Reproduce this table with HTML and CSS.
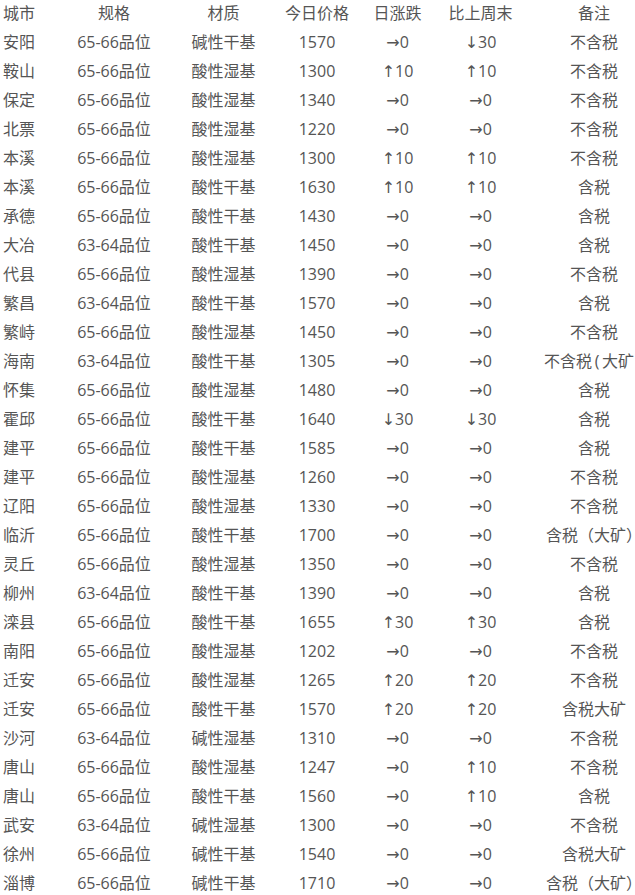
FILE: index.html
```html
<!DOCTYPE html>
<html lang="zh-CN">
<head>
<meta charset="utf-8">
<title>球团价格</title>
<link rel="stylesheet" href="styles.css">
</head>
<body>
<table class="price-table">
<colgroup>
<col class="c-city"><col class="c-spec"><col class="c-mat"><col class="c-price"><col class="c-day"><col class="c-week"><col class="c-note">
</colgroup>
<thead>
<tr><th class="city">城市</th><th>规格</th><th>材质</th><th>今日价格</th><th>日涨跌</th><th>比上周末</th><th>备注</th></tr>
</thead>
<tbody>
<tr><td class="city">安阳</td><td>65-66品位</td><td>碱性干基</td><td>1570</td><td><span class="ar">→</span>0</td><td><span class="ar">↓</span>30</td><td>不含税</td></tr>
<tr><td class="city">鞍山</td><td>65-66品位</td><td>酸性湿基</td><td>1300</td><td><span class="ar">↑</span>10</td><td><span class="ar">↑</span>10</td><td>不含税</td></tr>
<tr><td class="city">保定</td><td>65-66品位</td><td>酸性湿基</td><td>1340</td><td><span class="ar">→</span>0</td><td><span class="ar">→</span>0</td><td>不含税</td></tr>
<tr><td class="city">北票</td><td>65-66品位</td><td>酸性湿基</td><td>1220</td><td><span class="ar">→</span>0</td><td><span class="ar">→</span>0</td><td>不含税</td></tr>
<tr><td class="city">本溪</td><td>65-66品位</td><td>酸性湿基</td><td>1300</td><td><span class="ar">↑</span>10</td><td><span class="ar">↑</span>10</td><td>不含税</td></tr>
<tr><td class="city">本溪</td><td>65-66品位</td><td>酸性干基</td><td>1630</td><td><span class="ar">↑</span>10</td><td><span class="ar">↑</span>10</td><td>含税</td></tr>
<tr><td class="city">承德</td><td>65-66品位</td><td>酸性干基</td><td>1430</td><td><span class="ar">→</span>0</td><td><span class="ar">→</span>0</td><td>含税</td></tr>
<tr><td class="city">大冶</td><td>63-64品位</td><td>酸性干基</td><td>1450</td><td><span class="ar">→</span>0</td><td><span class="ar">→</span>0</td><td>含税</td></tr>
<tr><td class="city">代县</td><td>65-66品位</td><td>酸性湿基</td><td>1390</td><td><span class="ar">→</span>0</td><td><span class="ar">→</span>0</td><td>不含税</td></tr>
<tr><td class="city">繁昌</td><td>63-64品位</td><td>酸性干基</td><td>1570</td><td><span class="ar">→</span>0</td><td><span class="ar">→</span>0</td><td>含税</td></tr>
<tr><td class="city">繁峙</td><td>65-66品位</td><td>酸性湿基</td><td>1450</td><td><span class="ar">→</span>0</td><td><span class="ar">→</span>0</td><td>不含税</td></tr>
<tr><td class="city">海南</td><td>63-64品位</td><td>酸性干基</td><td>1305</td><td><span class="ar">→</span>0</td><td><span class="ar">→</span>0</td><td>不含税<span class="paren">(</span>大矿<span class="paren">)</span></td></tr>
<tr><td class="city">怀集</td><td>65-66品位</td><td>酸性湿基</td><td>1480</td><td><span class="ar">→</span>0</td><td><span class="ar">→</span>0</td><td>含税</td></tr>
<tr><td class="city">霍邱</td><td>65-66品位</td><td>酸性干基</td><td>1640</td><td><span class="ar">↓</span>30</td><td><span class="ar">↓</span>30</td><td>含税</td></tr>
<tr><td class="city">建平</td><td>65-66品位</td><td>酸性干基</td><td>1585</td><td><span class="ar">→</span>0</td><td><span class="ar">→</span>0</td><td>含税</td></tr>
<tr><td class="city">建平</td><td>65-66品位</td><td>酸性湿基</td><td>1260</td><td><span class="ar">→</span>0</td><td><span class="ar">→</span>0</td><td>不含税</td></tr>
<tr><td class="city">辽阳</td><td>65-66品位</td><td>酸性湿基</td><td>1330</td><td><span class="ar">→</span>0</td><td><span class="ar">→</span>0</td><td>不含税</td></tr>
<tr><td class="city">临沂</td><td>65-66品位</td><td>酸性干基</td><td>1700</td><td><span class="ar">→</span>0</td><td><span class="ar">→</span>0</td><td>含税（大矿）</td></tr>
<tr><td class="city">灵丘</td><td>65-66品位</td><td>酸性湿基</td><td>1350</td><td><span class="ar">→</span>0</td><td><span class="ar">→</span>0</td><td>不含税</td></tr>
<tr><td class="city">柳州</td><td>63-64品位</td><td>酸性干基</td><td>1390</td><td><span class="ar">→</span>0</td><td><span class="ar">→</span>0</td><td>含税</td></tr>
<tr><td class="city">滦县</td><td>65-66品位</td><td>酸性干基</td><td>1655</td><td><span class="ar">↑</span>30</td><td><span class="ar">↑</span>30</td><td>含税</td></tr>
<tr><td class="city">南阳</td><td>65-66品位</td><td>酸性湿基</td><td>1202</td><td><span class="ar">→</span>0</td><td><span class="ar">→</span>0</td><td>不含税</td></tr>
<tr><td class="city">迁安</td><td>65-66品位</td><td>酸性湿基</td><td>1265</td><td><span class="ar">↑</span>20</td><td><span class="ar">↑</span>20</td><td>不含税</td></tr>
<tr><td class="city">迁安</td><td>65-66品位</td><td>酸性干基</td><td>1570</td><td><span class="ar">↑</span>20</td><td><span class="ar">↑</span>20</td><td>含税大矿</td></tr>
<tr><td class="city">沙河</td><td>63-64品位</td><td>碱性湿基</td><td>1310</td><td><span class="ar">→</span>0</td><td><span class="ar">→</span>0</td><td>不含税</td></tr>
<tr><td class="city">唐山</td><td>65-66品位</td><td>酸性湿基</td><td>1247</td><td><span class="ar">→</span>0</td><td><span class="ar">↑</span>10</td><td>不含税</td></tr>
<tr><td class="city">唐山</td><td>65-66品位</td><td>酸性干基</td><td>1560</td><td><span class="ar">→</span>0</td><td><span class="ar">↑</span>10</td><td>含税</td></tr>
<tr><td class="city">武安</td><td>63-64品位</td><td>碱性湿基</td><td>1300</td><td><span class="ar">→</span>0</td><td><span class="ar">→</span>0</td><td>不含税</td></tr>
<tr><td class="city">徐州</td><td>65-66品位</td><td>碱性干基</td><td>1540</td><td><span class="ar">→</span>0</td><td><span class="ar">→</span>0</td><td>含税大矿</td></tr>
<tr><td class="city">淄博</td><td>65-66品位</td><td>碱性干基</td><td>1710</td><td><span class="ar">→</span>0</td><td><span class="ar">→</span>0</td><td>含税（大矿）</td></tr>
</tbody>
</table>
</body>
</html>
```

FILE: styles.css
```css
html, body {
  margin: 0;
  padding: 0;
  background: #fff;
  overflow: hidden;
}

.price-table {
  margin-top: -1px;
  border-collapse: collapse;
  border-spacing: 0;
  table-layout: fixed;
  width: 663px;
  font-family: "Open Sans", "Noto Sans CJK SC", sans-serif;
  font-size: 16px;
  color: #555;
}

.c-city { width: 56px; }
.c-spec { width: 116px; }
.c-mat { width: 103px; }
.c-price { width: 84px; }
.c-day { width: 77px; }
.c-week { width: 89px; }
.c-note { width: 138px; }

.price-table th,
.price-table td {
  height: 29px;
  padding: 0;
  text-align: center;
  font-weight: normal;
  line-height: 29px;
  white-space: nowrap;
  vertical-align: middle;
}

.price-table .city {
  text-align: left;
  padding-left: 3px;
}

.ar {
  font-family: "DejaVu Sans", sans-serif;
}

.paren {
  display: inline-block;
  width: 10px;
  text-align: center;
}
```
